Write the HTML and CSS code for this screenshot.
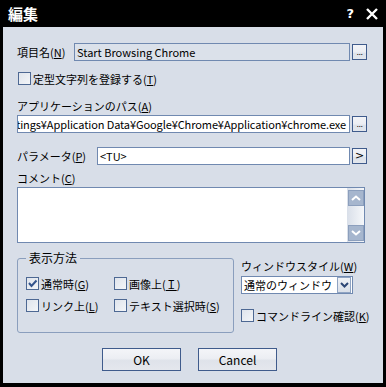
FILE: index.html
```html
<!DOCTYPE html>
<html lang="ja">
<head>
<meta charset="utf-8">
<title>編集</title>
<link rel="stylesheet" href="styles.css">
</head>
<body>
<div class="window">
  <div class="titlebar">
    <span class="title">編集</span>
    <div class="tb-buttons">
      <span class="help">?</span>
      <svg class="close" width="12" height="12" viewBox="0 0 12 12"><path d="M1 1 L11 11 M11 1 L1 11" stroke="#fff" stroke-width="2.4" fill="none"/></svg>
    </div>
  </div>
  <div class="client">
    <div class="row name-row">
      <span class="lbl w-name">項目名(<u>N</u>)</span>
      <div class="textbox ro">Start Browsing Chrome</div>
      <span class="mini dots">...</span>
    </div>
    <div class="check-row top-check">
      <span class="cb"></span><span>定型文字列を登録する(<u>T</u>)</span>
    </div>
    <div class="label path-label">アプリケーションのパス(<u>A</u>)</div>
    <div class="row path-row">
      <div class="textbox path"><span>tings¥Application Data¥Google¥Chrome¥Application¥chrome.exe</span></div>
      <span class="mini dots">...</span>
    </div>
    <div class="row param-row">
      <span class="lbl w-param">パラメータ(<u>P</u>)</span>
      <div class="textbox">&lt;TU&gt;</div>
      <span class="mini arrow">&gt;</span>
    </div>
    <div class="label comment-label">コメント(<u>C</u>)</div>
    <div class="textarea">
      <div class="ta-body"></div>
      <div class="scrollbar">
        <span class="sb-btn"><svg width="10" height="6" viewBox="0 0 10 6"><path d="M1 5 L5 1.5 L9 5" stroke="#fff" stroke-width="2" fill="none"/></svg></span>
        <span class="sb-btn"><svg width="10" height="6" viewBox="0 0 10 6"><path d="M1 1 L5 4.5 L9 1" stroke="#fff" stroke-width="2" fill="none"/></svg></span>
      </div>
    </div>
    <div class="lower">
      <fieldset class="group">
        <legend>表示方法</legend>
        <div class="group-grid">
          <div class="check-row"><span class="cb checked"><svg width="11" height="11" viewBox="0 0 11 11"><path d="M2 5 L4.5 8 L9.5 2.5" stroke="#34548c" stroke-width="2" fill="none"/></svg></span><span>通常時(<u>G</u>)</span></div>
          <div class="check-row"><span class="cb"></span><span>画像上(<u>Ｉ</u>)</span></div>
          <div class="check-row"><span class="cb"></span><span>リンク上(<u>L</u>)</span></div>
          <div class="check-row"><span class="cb"></span><span>テキスト選択時(<u>S</u>)</span></div>
        </div>
      </fieldset>
      <div class="right-col">
        <div class="label ws-label">ウィンドウスタイル(<u>W</u>)</div>
        <div class="select">
          <span class="sel-text">通常のウィンドウ</span>
          <span class="sel-btn"><svg width="9" height="6" viewBox="0 0 9 6"><path d="M1 1 L4.5 4.5 L8 1" stroke="#2c4675" stroke-width="2" fill="none"/></svg></span>
        </div>
        <div class="check-row cmd-check"><span class="cb"></span><span>コマンドライン確認(<u>K</u>)</span></div>
      </div>
    </div>
    <div class="buttons">
      <span class="btn">OK</span>
      <span class="btn">Cancel</span>
    </div>
  </div>
</div>
</body>
</html>
```
FILE: styles.css
```css
html, body {
  margin: 0;
  padding: 0;
}
body {
  width: 386px;
  height: 387px;
  overflow: hidden;
  background: #000;
  font-family: "Noto Sans CJK JP", "Liberation Sans", sans-serif;
  font-size: 11px;
  color: #000;
}
u { text-decoration: underline; text-underline-offset: 1px; }

.window {
  padding: 0 3px 4px 3px;
}
.titlebar {
  height: 27px;
  display: flex;
  align-items: center;
  justify-content: space-between;
  padding: 0 5px 0 5px;
  color: #fff;
}
.title {
  font-size: 15px;
  font-weight: bold;
  line-height: 15px;
  margin-top: -1px;
}
.tb-buttons {
  display: flex;
  align-items: center;
  gap: 12px;
}
.help {
  font-family: "DejaVu Sans", sans-serif;
  font-weight: bold;
  font-size: 13px;
  line-height: 13px;
  margin-top: -1px;
}
.close { display: block; margin-top: 1px; }

.client {
  background: #d8dee8;
  height: 356px;
  box-sizing: border-box;
  padding: 16px 16px 0 14px;
  display: flex;
  flex-direction: column;
}

.row {
  display: flex;
  align-items: center;
  height: 18px;
}
.lbl {
  flex: none;
  line-height: 14px;
  white-space: nowrap;
}
.w-name { width: 57px; }
.w-param { width: 80px; }
.label {
  line-height: 14px;
  height: 14px;
  white-space: nowrap;
}

.textbox {
  flex: 1;
  min-width: 0;
  height: 18px;
  box-sizing: border-box;
  border: 1px solid #7089b0;
  background: #fff;
  line-height: 16px;
  padding: 0 2px;
  white-space: nowrap;
  overflow: hidden;
}
.textbox.ro { background: #dbe1ea; }
.textbox.path {
  display: flex;
  justify-content: flex-end;
  padding: 0 3px 0 0;
}
.textbox.path span { flex: none; letter-spacing: -0.1px; }

.mini {
  flex: none;
  width: 15px;
  height: 16px;
  box-sizing: border-box;
  margin-left: 2px;
  border: 1px solid #3f5b8c;
  background: linear-gradient(#f2f3f7 0%, #eceef3 50%, #dde2ea 60%, #e2e6ec 100%);
  display: flex;
  justify-content: center;
}
.mini.dots {
  font-family: "Liberation Sans", sans-serif;
  font-size: 9px;
  line-height: 9px;
  align-items: flex-end;
  padding-bottom: 2px;
  letter-spacing: -0.5px;
}
.mini.arrow {
  font-family: "DejaVu Sans", sans-serif;
  font-size: 11px;
  line-height: 14px;
  align-items: center;
}

.check-row {
  display: flex;
  align-items: center;
  height: 13px;
  line-height: 14px;
  white-space: nowrap;
}
.top-check { margin-top: 11px; margin-left: 1px; }
.cb {
  flex: none;
  width: 13px;
  height: 13px;
  box-sizing: border-box;
  border: 1px solid #4d6893;
  background: linear-gradient(135deg, #dfe4ec, #f3f5f8);
  margin-right: 2px;
  display: flex;
  align-items: center;
  justify-content: center;
}
.cb svg { display: block; }

.path-label { margin-top: 14px; }
.path-row { margin-top: 2px; }
.param-row { margin-top: 14px; }
.comment-label { margin-top: 6px; }

.textarea {
  margin-top: 2px;
  width: 348px;
  height: 56px;
  box-sizing: border-box;
  border: 1px solid #7089b0;
  background: #fff;
  display: flex;
}
.ta-body { flex: 1; }
.scrollbar {
  width: 17px;
  box-sizing: border-box;
  padding: 2px 1px 1px 1px;
  background: linear-gradient(to right, #d9dfe9, #f5f7fa);
  display: flex;
  flex-direction: column;
  justify-content: space-between;
}
.sb-btn {
  width: 16px;
  height: 16px;
  box-sizing: border-box;
  border: 1px solid #8c9fbd;
  background: #a6b6ce;
  display: flex;
  align-items: center;
  justify-content: center;
}
.sb-btn svg { display: block; }

.lower {
  margin-top: 8px;
  display: flex;
  gap: 7px;
}
.group {
  flex: none;
  margin: 0;
  width: 217px;
  box-sizing: border-box;
  border: 1px solid #8a9ebd;
  border-radius: 3px;
  padding: 12px 8px 20px 8px;
  min-width: 0;
}
.group legend {
  padding: 0 3px;
  margin-left: 0;
  line-height: 14px;
  font-size: 12px;
}
.group-grid {
  display: grid;
  grid-template-columns: 88px auto;
  row-gap: 9px;
}
.right-col {
  flex: none;
  display: flex;
  flex-direction: column;
}
.ws-label { margin-top: 8px; }
.select {
  margin-top: 3px;
  width: 112px;
  height: 18px;
  box-sizing: border-box;
  border: 1px solid #7089b0;
  background: #fff;
  display: flex;
  align-items: center;
  justify-content: space-between;
  padding: 0 1px 0 2px;
}
.sel-text { line-height: 16px; white-space: nowrap; font-size: 11px; }
.sel-btn {
  flex: none;
  width: 14px;
  height: 16px;
  box-sizing: border-box;
  border: 1px solid #8fa3c2;
  background: linear-gradient(#f0f2f6, #d9dfe8);
  display: flex;
  align-items: center;
  justify-content: center;
}
.sel-btn svg { display: block; }
.cmd-check { margin-top: 15px; }

.buttons {
  margin-top: 15px;
  display: flex;
  justify-content: center;
  gap: 17px;
  padding-right: 5px;
}
.btn {
  width: 79px;
  height: 23px;
  box-sizing: border-box;
  border: 1px solid #3f5b8c;
  background: linear-gradient(#f4f5f8 0%, #eceef3 45%, #dfe3ea 55%, #e4e7ed 100%);
  display: flex;
  align-items: center;
  justify-content: center;
  line-height: 14px;
  font-size: 12px;
}
```
